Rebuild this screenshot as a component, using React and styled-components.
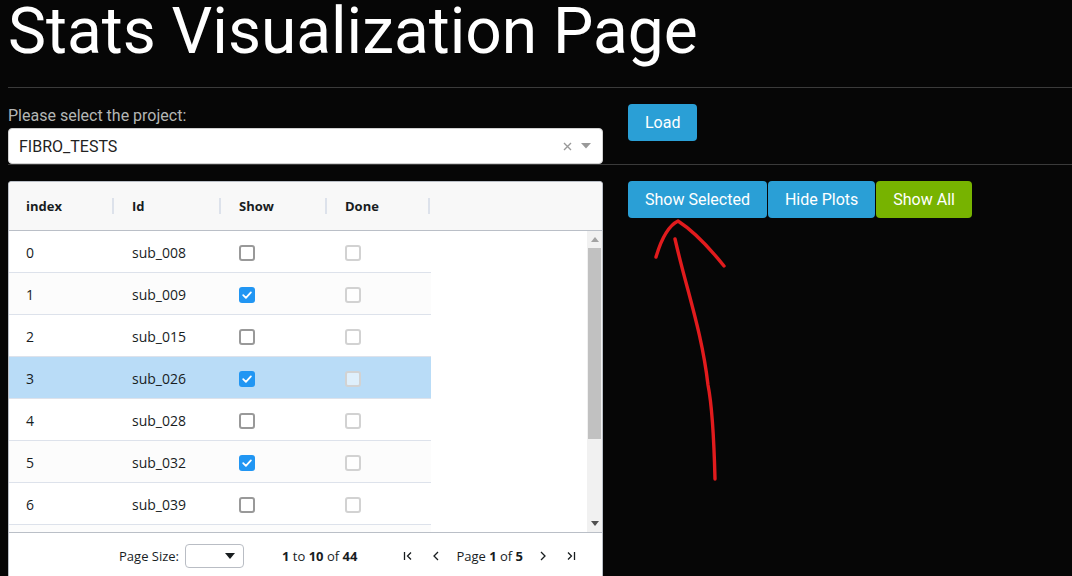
import React from "react";
import styled, { createGlobalStyle } from "styled-components";

const GlobalStyle = createGlobalStyle`
  html, body {
    margin: 0;
    padding: 0;
    background: #060606;
    overflow: hidden;
    height: 100%;
  }
  body {
    font-family: Roboto, "Liberation Sans", sans-serif;
    color: #adafae;
  }
`;

const rows = [
  { index: 0, id: "sub_008", show: false },
  { index: 1, id: "sub_009", show: true },
  { index: 2, id: "sub_015", show: false },
  { index: 3, id: "sub_026", show: true, selected: true },
  { index: 4, id: "sub_028", show: false },
  { index: 5, id: "sub_032", show: true },
  { index: 6, id: "sub_039", show: false },
  { index: 7, id: "sub_041", show: false },
  { index: 8, id: "sub_043", show: false },
  { index: 9, id: "sub_044", show: false },
];

const columns = [
  { label: "index", width: 106 },
  { label: "Id", width: 107 },
  { label: "Show", width: 106 },
  { label: "Done", width: 103 },
];

const Checkbox = ({ checked, disabled }) => (
  <Box checked={checked} disabled={disabled}>
    {checked && (
      <svg width="12" height="12" viewBox="0 0 12 12">
        <path d="M2.2 6.2 L4.9 8.8 L9.9 3.4" fill="none" stroke="#fff" strokeWidth="1.8" strokeLinecap="round" strokeLinejoin="round" />
      </svg>
    )}
  </Box>
);

const PagerIcon = ({ kind }) => (
  <IconBtn>
    <svg width="12" height="12" viewBox="0 0 12 12" fill="none" stroke="#181d1f" strokeWidth="1.3">
      {kind === "first" && (
        <>
          <path d="M2.5 2 V10" />
          <path d="M9 2.5 L5.5 6 L9 9.5" />
        </>
      )}
      {kind === "prev" && <path d="M8 2 L4 6 L8 10" />}
      {kind === "next" && <path d="M4 2 L8 6 L4 10" />}
      {kind === "last" && (
        <>
          <path d="M3 2.5 L6.5 6 L3 9.5" />
          <path d="M9.5 2 V10" />
        </>
      )}
    </svg>
  </IconBtn>
);

const App = () => {
  return (
    <>
      <GlobalStyle />
      <Page>
        <Title>Stats Visualization Page</Title>
        <Divider />
        <Row>
          <LeftCol>
            <Label>Please select the project:</Label>
            <Select>
              <SelectValue>FIBRO_TESTS</SelectValue>
              <SelectControls>
                <svg width="9" height="9" viewBox="0 0 9 9" stroke="#999" strokeWidth="1.4">
                  <path d="M1 1 L8 8 M8 1 L1 8" />
                </svg>
                <svg width="10" height="6" viewBox="0 0 10 6">
                  <path d="M0 0 H10 L5 5.5 Z" fill="#999" />
                </svg>
              </SelectControls>
            </Select>
          </LeftCol>
          <RightCol>
            <Button>Load</Button>
          </RightCol>
        </Row>
        <Divider />
        <Row>
          <Grid>
            <GridHeader>
              {columns.map((c) => (
                <HeaderCell key={c.label} w={c.width}>
                  {c.label}
                  <Separator />
                </HeaderCell>
              ))}
            </GridHeader>
            <GridBody>
              <RowsArea>
                {rows.map((r) => (
                  <GridRow key={r.index} odd={r.index % 2 === 1} selected={r.selected}>
                    <Cell w={columns[0].width}>{r.index}</Cell>
                    <Cell w={columns[1].width}>{r.id}</Cell>
                    <Cell w={columns[2].width}>
                      <Checkbox checked={r.show} />
                    </Cell>
                    <Cell w={columns[3].width}>
                      <Checkbox disabled />
                    </Cell>
                  </GridRow>
                ))}
              </RowsArea>
              <Scrollbar>
                <ScrollArrow>
                  <svg width="8" height="5" viewBox="0 0 8 5"><path d="M0 5 L4 0 L8 5 Z" fill="#a3a3a3" /></svg>
                </ScrollArrow>
                <ScrollTrack>
                  <ScrollThumb />
                </ScrollTrack>
                <ScrollArrow>
                  <svg width="8" height="5" viewBox="0 0 8 5"><path d="M0 0 L8 0 L4 5 Z" fill="#505050" /></svg>
                </ScrollArrow>
              </Scrollbar>
            </GridBody>
            <Footer>
              <PageSize>
                Page Size:
                <SizeSelect>
                  <svg width="10" height="6" viewBox="0 0 10 6"><path d="M0 0 H10 L5 6 Z" fill="#181d1f" /></svg>
                </SizeSelect>
              </PageSize>
              <Summary>
                <b>1</b> to <b>10</b> of <b>44</b>
              </Summary>
              <Pager>
                <PagerIcon kind="first" />
                <PagerIcon kind="prev" />
                <PageText>
                  Page <b>1</b> of <b>5</b>
                </PageText>
                <PagerIcon kind="next" />
                <PagerIcon kind="last" />
              </Pager>
            </Footer>
          </Grid>
          <RightCol>
            <ButtonGroup>
              <Button>Show Selected</Button>
              <Button>Hide Plots</Button>
              <Button variant="success">Show All</Button>
            </ButtonGroup>
          </RightCol>
        </Row>
        <Annotation width="1072" height="576" viewBox="0 0 1072 576">
          <g fill="none" stroke="#e11b1d" strokeWidth="3.4" strokeLinecap="round" strokeLinejoin="round">
            <path d="M715 479 C 714 440, 712 405, 708 385 C 704 350, 696 320, 688 290 C 682 268, 678 252, 675 239" />
            <path d="M656 257 C 661 240, 668 226, 678 221 C 692 230, 708 246, 724 266" />
          </g>
        </Annotation>
      </Page>
    </>
  );
};

export default App;

const Page = styled.div`
  position: relative;
  padding-left: 8px;
  height: 576px;
  overflow: hidden;
`;

const Title = styled.h1`
  margin: 0 0 23px;
  font-family: Roboto, sans-serif;
  font-weight: 400;
  font-size: 64px;
  line-height: 64px;
  color: #ffffff;
`;

const Divider = styled.hr`
  margin: 0;
  border: 0;
  border-top: 1px solid #3a3a3a;
`;

const Row = styled.div`
  display: flex;
  align-items: flex-start;
  margin-top: 16px;
`;

const LeftCol = styled.div`
  width: 595px;
  display: flex;
  flex-direction: column;
`;

const RightCol = styled.div`
  margin-left: 25px;
`;

const Label = styled.label`
  font-size: 16px;
  line-height: 24px;
  color: #b4b6b5;
`;

const Select = styled.div`
  height: 36px;
  box-sizing: border-box;
  background: #ffffff;
  border: 1px solid #d0d0d0;
  border-radius: 4px;
  display: flex;
  align-items: center;
  justify-content: space-between;
  padding: 0 11px 0 10px;
`;

const SelectValue = styled.span`
  font-size: 16px;
  color: #222;
`;

const SelectControls = styled.div`
  display: flex;
  align-items: center;
  gap: 9px;
`;

const Button = styled.button`
  height: 37px;
  padding: 0 17px;
  border: 0;
  border-radius: 4px;
  background: ${(p) => (p.variant === "success" ? "#77b300" : "#2a9fd6")};
  color: #ffffff;
  font-family: Roboto, sans-serif;
  font-size: 16px;
  cursor: pointer;
`;

const ButtonGroup = styled.div`
  display: flex;
  gap: 1px;
`;

const Grid = styled.div`
  width: 595px;
  height: 410px;
  box-sizing: border-box;
  border: 1px solid #babfc7;
  border-radius: 3px;
  background: #ffffff;
  display: flex;
  flex-direction: column;
  font-family: "Open Sans", "Noto Sans", sans-serif;
  color: #181d1f;
  flex-shrink: 0;
`;

const GridHeader = styled.div`
  height: 48px;
  display: flex;
  background: #f8f8f8;
  border-bottom: 1px solid #babfc7;
  border-radius: 3px 3px 0 0;
`;

const HeaderCell = styled.div`
  position: relative;
  width: ${(p) => p.w}px;
  box-sizing: border-box;
  padding-left: 17px;
  display: flex;
  align-items: center;
  font-size: 13px;
  font-weight: 700;
`;

const Separator = styled.span`
  position: absolute;
  right: 1px;
  top: 16px;
  width: 2px;
  height: 16px;
  background: #dde2eb;
`;

const GridBody = styled.div`
  height: 301px;
  display: flex;
  overflow: hidden;
  border-bottom: 1px solid #babfc7;
`;

const RowsArea = styled.div`
  flex: 1;
  overflow: hidden;
`;

const GridRow = styled.div`
  display: flex;
  width: 422px;
  height: 41px;
  border-bottom: 1px solid #dde2eb;
  background: ${(p) => (p.selected ? "#b9dcf7" : p.odd ? "#fcfcfc" : "#ffffff")};
`;

const Cell = styled.div`
  width: ${(p) => p.w}px;
  box-sizing: border-box;
  padding-left: 17px;
  padding-top: 2px;
  display: flex;
  align-items: center;
  font-size: 14px;
`;

const Box = styled.span`
  width: 16px;
  height: 16px;
  box-sizing: border-box;
  border-radius: 3px;
  display: flex;
  align-items: center;
  justify-content: center;
  background: ${(p) => (p.checked ? "#2196f3" : p.disabled ? "rgba(255,255,255,0.55)" : "#ffffff")};
  border: ${(p) => (p.checked ? "none" : p.disabled ? "2px solid #d2d2d2" : "2px solid #999999")};
`;

const Scrollbar = styled.div`
  width: 15px;
  background: #f1f1f1;
  display: flex;
  flex-direction: column;
  align-items: center;
`;

const ScrollArrow = styled.div`
  height: 17px;
  display: flex;
  align-items: center;
  justify-content: center;
`;

const ScrollTrack = styled.div`
  flex: 1;
  display: flex;
  justify-content: center;
`;

const ScrollThumb = styled.div`
  width: 13px;
  height: 191px;
  background: #c1c1c1;
`;

const Footer = styled.div`
  height: 45px;
  display: flex;
  align-items: center;
  justify-content: flex-end;
  padding-right: 24px;
  font-size: 13px;
`;

const PageSize = styled.div`
  display: flex;
  align-items: center;
  gap: 6px;
`;

const SizeSelect = styled.div`
  width: 59px;
  height: 24px;
  box-sizing: border-box;
  border: 1px solid #b9bdc4;
  border-radius: 4px;
  display: flex;
  align-items: center;
  justify-content: flex-end;
  padding-right: 8px;
`;

const Summary = styled.div`
  margin-left: 38px;
`;

const Pager = styled.div`
  margin-left: 44px;
  display: flex;
  align-items: center;
  gap: 14px;
`;

const PageText = styled.span`
  margin: 0 -1px;
`;

const IconBtn = styled.span`
  width: 14px;
  display: flex;
  justify-content: center;
`;

const Annotation = styled.svg`
  position: absolute;
  left: 0;
  top: 0;
  pointer-events: none;
`;
